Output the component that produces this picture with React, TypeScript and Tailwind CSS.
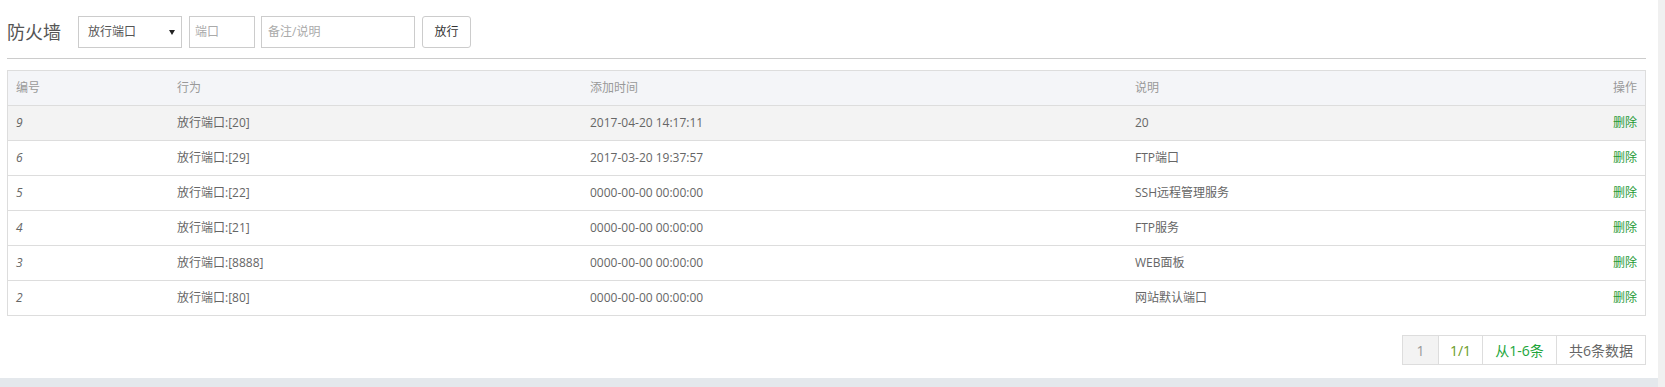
import React from 'react';

interface Rule {
  id: number;
  action: string;
  time: string;
  note: string;
}

const rules: Rule[] = [
  { id: 9, action: '放行端口:[20]', time: '2017-04-20 14:17:11', note: '20' },
  { id: 6, action: '放行端口:[29]', time: '2017-03-20 19:37:57', note: 'FTP端口' },
  { id: 5, action: '放行端口:[22]', time: '0000-00-00 00:00:00', note: 'SSH远程管理服务' },
  { id: 4, action: '放行端口:[21]', time: '0000-00-00 00:00:00', note: 'FTP服务' },
  { id: 3, action: '放行端口:[8888]', time: '0000-00-00 00:00:00', note: 'WEB面板' },
  { id: 2, action: '放行端口:[80]', time: '0000-00-00 00:00:00', note: '网站默认端口' },
];

const font = { fontFamily: '"Open Sans", "Noto Sans CJK SC", sans-serif' };
const cols = 'grid grid-cols-[161px_413px_545px_1fr_100px] items-center';

const App: React.FC = () => {
  return (
    <div className="flex w-[1665px] h-[387px] bg-[#e4e8ec] text-[12px] text-[#666]" style={font}>
      <div className="flex flex-col w-[1658px]">
        <div className="bg-white h-[378px] pl-[7px] pr-[12px] pt-[16px]">
          {/* Toolbar */}
          <div className="flex items-center h-[32px]">
            <span className="text-[18px] text-[#555] w-[71px]">防火墙</span>
            <div className="flex items-center justify-between w-[104px] h-[32px] border border-[#ccc] pl-[9px] pr-[6px] text-[#555]">
              <span>放行端口</span>
              <span className="w-0 h-0 border-l-[3px] border-r-[3px] border-t-[5px] border-l-transparent border-r-transparent border-t-[#222]" />
            </div>
            <div className="ml-[7px] w-[66px] h-[32px] border border-[#ccc] flex items-center pl-[5px] text-[#aaa]">端口</div>
            <div className="ml-[6px] w-[154px] h-[32px] border border-[#ccc] flex items-center pl-[6px] text-[#aaa]">备注/说明</div>
            <button className="ml-[7px] w-[49px] h-[32px] border border-[#ccc] rounded-[3px] text-[#333] bg-white">放行</button>
          </div>

          <div className="mt-[10px] border-t border-[#ccc]" />

          {/* Table */}
          <div className="mt-[11px] border border-[#ddd]">
            <div className={`${cols} h-[35px] bg-[#f4f5f8] border-b border-[#ddd] text-[#999]`}>
              <span className="pl-[8px]">编号</span>
              <span className="pl-[8px]">行为</span>
              <span className="pl-[8px]">添加时间</span>
              <span className="pl-[8px]">说明</span>
              <span className="pr-[8px] text-right">操作</span>
            </div>
            {rules.map((r, i) => (
              <div
                key={r.id}
                className={`${cols} h-[34px] box-content ${i < rules.length - 1 ? 'border-b border-[#ddd]' : ''} ${i === 0 ? 'bg-[#f3f3f3]' : 'bg-white'}`}
              >
                <span className="pl-[8px] italic">{r.id}</span>
                <span className="pl-[8px]">{r.action}</span>
                <span className="pl-[8px]">{r.time}</span>
                <span className="pl-[8px]">{r.note}</span>
                <span className="pr-[8px] text-right text-[#1f9a35]">删除</span>
              </div>
            ))}
          </div>

          {/* Pagination */}
          <div className="flex justify-end mt-[19px]">
            <div className="flex h-[30px] border border-[#ddd] text-[14px]">
              <span className="w-[35px] flex items-center justify-center bg-[#f3f3f3] text-[#999]">1</span>
              <span className="w-[44px] flex items-center justify-center border-l border-[#ddd] text-[#6b9b1f]">1/1</span>
              <span className="w-[74px] flex items-center justify-center border-l border-[#ddd] text-[#20a53a]">从1-6条</span>
              <span className="w-[89px] flex items-center justify-center border-l border-[#ddd] text-[#666]">共6条数据</span>
            </div>
          </div>
        </div>
      </div>
      <div className="w-[7px] bg-[#f0f0f0]" />
    </div>
  );
};

export default App;
